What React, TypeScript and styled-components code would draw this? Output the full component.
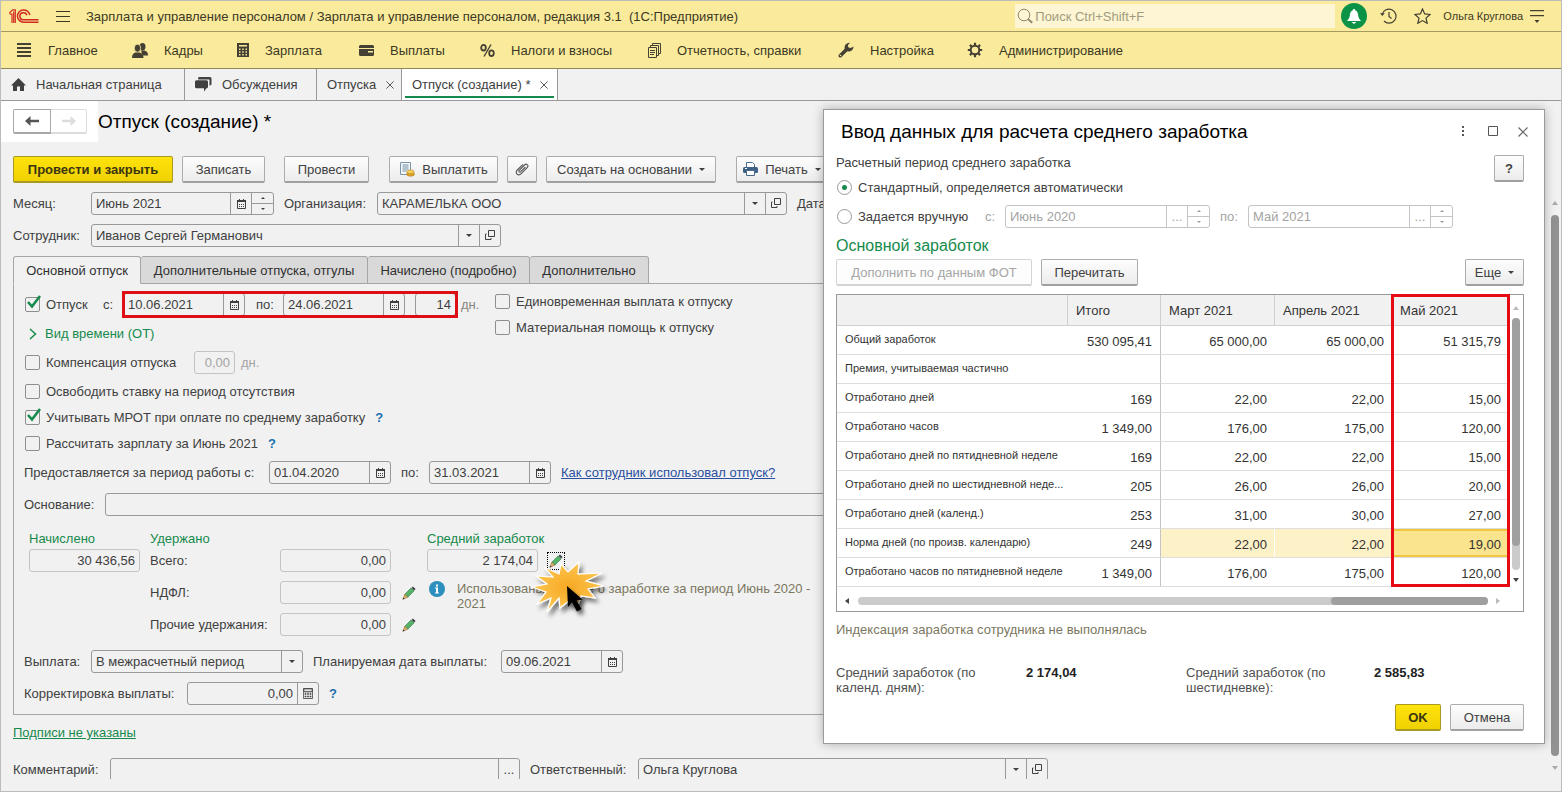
import React from 'react';
import styled, { createGlobalStyle, css } from 'styled-components';

const GlobalStyle = createGlobalStyle`
  *, *::before, *::after { box-sizing: border-box; }
  body { margin: 0; background: #f1f1f1; }
  body, button, input, select, textarea {
    font-family: 'Liberation Sans', Arial, sans-serif;
    font-size: 13px;
    line-height: 15px;
    color: #404040;
  }
  h1, h2, h3, p { margin: 0; font-weight: normal; }
`;

const GREEN = '#168a4c';
const LINE = '#999999';

/* ---------- shell ---------- */

const Shell = styled.div`
  height: 100vh;
  display: flex;
  flex-direction: column;
  border: 1px solid #bcbcbc;
  background: #f1f1f1;
  overflow: hidden;
`;

const TitleBar = styled.header`
  flex: none;
  display: flex;
  align-items: center;
  height: 31px;
  padding: 0 13px 0 8px;
  background: #faeb9c;
  border-bottom: 1px solid #a59a61;
`;

const AppTitle = styled.h1`
  flex: 1;
  font-size: 13px;
  line-height: 15px;
  color: #3c3823;
  white-space: pre;
`;

const IconButton = styled.button<{ $w?: number }>`
  display: flex;
  align-items: center;
  justify-content: center;
  flex: none;
  width: ${p => p.$w ?? 34}px;
  height: 28px;
  padding: 0;
  border: 0;
  background: none;
`;

const SearchBox = styled.label`
  display: flex;
  align-items: center;
  width: 320px;
  height: 24px;
  padding-left: 2px;
  gap: 2px;
  background: #fdf5d3;
  margin-right: 6px;

  input {
    flex: 1;
    border: 0;
    padding: 0;
    background: none;
    outline: none;
  }
  input::placeholder { color: #a19c80; opacity: 1; }
`;

const Bell = styled(IconButton)`
  width: 26px;
  height: 26px;
  border-radius: 50%;
  background: #0a9347;
  margin-right: 4px;
`;

const UserName = styled.span`
  font-size: 11px;
  color: #3c3823;
  margin: 0 3px 0 4px;
`;

const MenuBar = styled.nav`
  flex: none;
  display: flex;
  height: 37px;
  padding-left: 16px;
  background: #faeb9c;
  border-bottom: 1px solid #8f865a;
`;

const MenuItem = styled.a<{ $w: number }>`
  display: flex;
  align-items: center;
  gap: 16px;
  width: ${p => p.$w}px;
  color: #3c3823;
  text-decoration: none;
  white-space: nowrap;
  svg { flex: none; }
`;

const WindowTabs = styled.div`
  flex: none;
  display: flex;
  height: 32px;
  border-bottom: 1px solid ${LINE};
`;

const WindowTab = styled.button<{ $w: number; $active?: boolean }>`
  position: relative;
  display: flex;
  align-items: center;
  gap: 10px;
  width: ${p => p.$w}px;
  padding: 0 0 0 10px;
  border: 0;
  border-right: 1px solid ${LINE};
  background: ${p => (p.$active ? '#fff' : 'none')};
  white-space: nowrap;
  ${p => p.$active && css`
    &::after {
      content: '';
      position: absolute;
      left: 3px;
      right: 3px;
      bottom: 2px;
      height: 2px;
      background: ${GREEN};
    }
  `}
`;

const Workspace = styled.main`
  position: relative;
  flex: 1;
  min-height: 0;
  display: flex;
  padding-bottom: 12px;
`;

const FormArea = styled.div`
  flex: 1;
  min-width: 0;
  overflow: hidden;
`;

/* ---------- form ---------- */

const NavRow = styled.div`
  display: flex;
  align-items: center;
  height: 41px;
`;

const NavButtons = styled.div`
  display: flex;
  align-items: center;
  width: 97px;
  height: 41px;
  padding-left: 12px;
  background: #fff;
`;

const NavButton = styled.button`
  display: flex;
  align-items: center;
  justify-content: center;
  width: 38px;
  height: 25px;
  padding: 0;
  border: 1px solid #a8a8a8;
  border-bottom-width: 2px;
  border-radius: 2px 0 0 2px;
  background: #fff;
  &:disabled {
    width: 36px;
    border-color: #dcdcdc;
    border-left: 0;
    border-radius: 0 2px 2px 0;
  }
`;

const FormTitle = styled.h2`
  font-size: 19px;
  line-height: 22px;
  color: #000;
`;

const Body = styled.div`
  display: flex;
  flex-direction: column;
  gap: 9px;
  padding: 14px 12px 0 12px;
`;

const Commands = styled.div`
  display: flex;
  height: 27px;
`;

const Button = styled.button<{ $w: number; $gap?: number; $primary?: boolean }>`
  display: flex;
  align-items: center;
  justify-content: center;
  gap: 7px;
  flex: none;
  width: ${p => p.$w}px;
  height: 27px;
  margin-right: ${p => p.$gap ?? 9}px;
  padding: 0;
  border: 1px solid #acacac;
  border-bottom: 2px solid #a0a0a0;
  border-radius: 2px;
  background: linear-gradient(#fdfdfd, #ececec);
  white-space: nowrap;
  ${p => p.$primary && css`
    font-weight: bold;
    color: #3b3511;
    border-color: #a89a20;
    background: linear-gradient(#ffe30c, #efd100);
  `}
  &:disabled {
    color: #a6a6a6;
    border-color: #d4d4d4;
    background: #fdfdfd;
  }
`;

const Row = styled.div<{ $gap?: number; $top?: number }>`
  display: flex;
  align-items: center;
  gap: ${p => p.$gap ?? 10}px;
  height: 23px;
  margin-top: ${p => p.$top ?? 0}px;
`;

const Label = styled.label<{ $w?: number; $muted?: boolean; $indent?: number }>`
  flex: none;
  width: ${p => (p.$w ? `${p.$w}px` : 'auto')};
  padding-left: ${p => p.$indent ?? 0}px;
  color: ${p => (p.$muted ? '#a3a3a3' : '#404040')};
  white-space: nowrap;
`;

const Unit = styled.span`
  padding-left: 5px;
  color: #85857c;
`;

const FieldBox = styled.div<{ $w?: number; $soft?: boolean; $muted?: boolean; $right?: boolean; $left?: number }>`
  position: relative;
  display: flex;
  flex: ${p => (p.$w ? 'none' : '1')};
  width: ${p => (p.$w ? `${p.$w}px` : 'auto')};
  height: 23px;
  margin-left: ${p => p.$left ?? 0}px;
  border: 1px solid ${p => (p.$soft || p.$muted ? '#c4c4c4' : LINE)};
  border-radius: 3px;

  input, select {
    flex: 1;
    width: 0;
    min-width: 0;
    padding: 0 4px;
    border: 0;
    background: none;
    outline: none;
    appearance: none;
    text-align: ${p => (p.$right ? 'right' : 'left')};
    color: ${p => (p.$muted ? '#a3a3a3' : '#404040')};
    opacity: 1;
  }
`;

const Segment = styled.button`
  display: flex;
  align-items: center;
  justify-content: center;
  flex: none;
  width: 21px;
  padding: 0;
  border: 0;
  border-left: 1px solid ${LINE};
  background: none;
  &:disabled { border-color: #c4c4c4; color: #a3a3a3; }
`;

const SpinBox = styled.div<{ $muted?: boolean }>`
  display: flex;
  flex-direction: column;
  flex: none;
  width: 22px;
  border-left: 1px solid ${p => (p.$muted ? '#c4c4c4' : LINE)};
  button {
    flex: 1;
    display: flex;
    align-items: center;
    justify-content: center;
    padding: 0;
    border: 0;
    background: none;
  }
  button + button { border-top: 1px solid ${p => (p.$muted ? '#c4c4c4' : LINE)}; }
`;

const SheetTabs = styled.div`
  position: relative;
  display: flex;
  height: 28px;
  margin-bottom: -1px;
`;

const SheetTab = styled.button<{ $w: number; $active?: boolean }>`
  width: ${p => p.$w}px;
  padding: 0;
  border: 1px solid #a6a6a6;
  border-left-width: ${p => (p.$active ? '1px' : '0')};
  border-bottom-color: ${p => (p.$active ? '#f1f1f1' : '#a6a6a6')};
  border-radius: 3px 3px 0 0;
  background: ${p => (p.$active ? '#f1f1f1' : '#d9d9d9')};
  color: #303030;
  white-space: nowrap;
`;

const Sheet = styled.section`
  border: 1px solid #a6a6a6;
  padding: 9px 10px;
`;

const Columns = styled.div`
  display: flex;
`;

const Stack = styled.div<{ $gap: number; $w?: number }>`
  display: flex;
  flex-direction: column;
  flex: none;
  gap: ${p => p.$gap}px;
  width: ${p => (p.$w ? `${p.$w}px` : 'auto')};
`;

const CheckLabel = styled.label`
  position: relative;
  display: flex;
  align-items: center;
  gap: 6px;
  padding-left: 1px;
  height: 17px;
  white-space: nowrap;
  input {
    appearance: none;
    width: 15px;
    height: 15px;
    margin: 0;
    border: 1px solid #8e8e8e;
    border-radius: 2px;
  }
  svg {
    position: absolute;
    left: 1px;
    top: -2px;
  }
`;

const Marked = styled.div`
  position: relative;
  display: flex;
  align-items: center;
`;

const RedFrame = styled.div`
  position: absolute;
  inset: -2px -2px -2px -1px;
  border: 3px solid #dd0f14;
  pointer-events: none;
`;

const Disclosure = styled.button`
  display: flex;
  align-items: center;
  gap: 8px;
  height: 23px;
  padding: 0 0 0 5px;
  border: 0;
  background: none;
  color: ${GREEN};
`;

const Help = styled.a`
  color: #1b6fae;
  font-size: 13px;
  font-weight: bold;
  text-decoration: none;
`;

const Link = styled.a<{ $green?: boolean }>`
  color: ${p => (p.$green ? GREEN : '#2a4fa0')};
  line-height: 17px;
  white-space: nowrap;
`;

const Totals = styled.div`
  display: flex;
  padding-left: 5px;
  margin: 13px 0 14px;
`;

const GroupTitle = styled.h3`
  font-size: 13px;
  line-height: 20px;
  color: ${GREEN};
`;

const PencilSlot = styled(IconButton)<{ $focused?: boolean }>`
  width: 16px;
  height: 16px;
  outline: ${p => (p.$focused ? '1px dotted #000' : 'none')};
`;

const Info = styled.div`
  position: relative;
  display: flex;
  gap: 12px;
  padding-left: 2px;
  svg { flex: none; }
  p { width: 370px; color: #7b7760; }
`;

const Burst = styled.svg`
  position: absolute;
  left: 100px;
  top: -26px;
`;

const CommentRow = styled(Row)`
  margin-top: 8px;
`;

/* ---------- outer scroll bar ---------- */

const PageScroll = styled.div`
  flex: none;
  display: flex;
  flex-direction: column;
  align-items: center;
  gap: 8px;
  width: 12px;
  padding: 98px 0 7px;
  span {
    flex: 1;
    width: 8px;
    border-radius: 4px;
    background: #929292;
  }
`;

/* ---------- dialog ---------- */

const Dialog = styled.section`
  position: absolute;
  top: 8px;
  right: 16px;
  width: 722px;
  padding: 0 20px 12px 12px;
  background: #fff;
  border: 1px solid #9a9a9a;
  box-shadow: 0 0 10px rgba(0, 0, 0, 0.28);
`;

const DialogHead = styled.header`
  display: flex;
  align-items: center;
  height: 43px;
  padding-left: 5px;
  margin-right: -14px;
  h2 { flex: 1; font-size: 19px; line-height: 22px; color: #000; }
`;

const PeriodHead = styled.div`
  display: flex;
  align-items: flex-start;
  justify-content: space-between;
  height: 21px;
  margin-top: 2px;
`;

const RadioLabel = styled.label<{ $w?: number }>`
  display: flex;
  align-items: center;
  gap: 6px;
  width: ${p => (p.$w ? `${p.$w}px` : 'auto')};
  white-space: nowrap;
  input {
    appearance: none;
    width: 15px;
    height: 15px;
    margin: 0 0 0 1px;
    border: 1px solid #9a9a9a;
    border-radius: 50%;
    background: #fff;
  }
  input:checked { background: radial-gradient(circle, ${GREEN} 0 2px, #fff 3px); }
`;

const SectionTitle = styled.h3`
  font-size: 16px;
  line-height: 20px;
  margin: 8px 0 3px;
  color: ${GREEN};
`;

const Spacer = styled.span`
  flex: 1;
`;

const GridBox = styled.div`
  position: relative;
  display: flex;
  flex-wrap: wrap;
  height: 318px;
  margin-top: 8px;
  border: 1px solid ${LINE};
`;

const Table = styled.table`
  width: 672px;
  height: 292px;
  table-layout: fixed;
  border-collapse: separate;
  border-spacing: 0;
  color: #333;

  th {
    height: 31px;
    padding: 0 8px;
    background: #f1f1f1;
    border-bottom: 1px solid #cfcfcf;
    border-right: 1px solid #cfcfcf;
    font-weight: normal;
    text-align: left;
  }
  th:last-child { border-right: 0; }
  td {
    height: 29px;
    padding: 2px 8px 0;
    border-bottom: 1px solid #dedede;
    text-align: right;
    white-space: nowrap;
  }
  td:first-child {
    padding: 0 0 2px 8px;
    font-size: 11px;
    text-align: left;
  }
  td:nth-child(2) { border-right: 1px solid #c4c4c4; }
`;

const Cell = styled.td<{ $state?: 'row' | 'current' }>`
  ${p => p.$state === 'row' && css`
    background: #fdf1c8;
    box-shadow: inset -1px 0 #fff;
  `}
  ${p => p.$state === 'current' && css`
    background: #fae48e;
    box-shadow: inset 0 0 0 2px #f0c840;
  `}
`;

const MonthFrame = styled.div`
  position: absolute;
  top: -1px;
  right: 13px;
  width: 119px;
  height: 293px;
  border: 3px solid #e60a12;
  pointer-events: none;
`;

const VScroll = styled.div`
  display: flex;
  flex-direction: column;
  align-items: center;
  gap: 6px;
  width: 14px;
  height: 292px;
  padding: 9px 0 3px;
  div {
    flex: 1;
    width: 8px;
    border-radius: 4px;
    background: #cbcbcb;
  }
  span {
    display: block;
    height: 228px;
    border-radius: 4px;
    background: #a0a0a0;
  }
`;

const HScroll = styled.div`
  display: flex;
  align-items: center;
  gap: 6px;
  width: 100%;
  height: 24px;
  padding: 4px 21px 0 7px;
  div {
    display: flex;
    justify-content: flex-end;
    flex: 1;
    height: 8px;
    border-radius: 4px;
    background: #cbcbcb;
  }
  span {
    width: 157px;
    border-radius: 4px;
    background: #9f9f9f;
  }
`;

const Note = styled.p`
  margin: 10px 0 28px;
  color: #7b7760;
`;

const Averages = styled.dl`
  display: grid;
  grid-template-columns: 160px 130px 158px 1fr;
  column-gap: 30px;
  margin: 0 0 9px;
  dt { color: #505050; }
  dd { margin: 0; font-weight: bold; color: #222; }
`;

const DialogFoot = styled.footer`
  display: flex;
  justify-content: flex-end;
`;

/* ---------- icons ---------- */

const Down = ({ color = '#404040' }: { color?: string }) => (
  <svg width="6" height="3" viewBox="0 0 6 3"><path d="M0 0h6L3 3z" fill={color} /></svg>
);

const Tri = ({ d, color }: { d: string; color: string }) => (
  <svg width="8" height="8" viewBox="0 0 8 8"><path d={d} fill={color} /></svg>
);

const OpenIcon = () => (
  <svg width="11" height="11" viewBox="0 0 11 11" fill="none" stroke="#404040">
    <path d="M3.500 .5h6v6h-6z" /><path d="M1.500 4H.5v5.500H6V8" />
  </svg>
);

const CalendarIcon = () => (
  <svg width="9" height="10" viewBox="0 0 9 10">
    <path d="M.5 2.500h8v7h-8z" fill="none" stroke="#404040" />
    <path d="M0 1h9v2H0zM2 0h1v2H2zM6 0h1v2H6z" fill="#404040" />
    <path d="M2 5.500h5M2 7.500h5" stroke="#404040" strokeDasharray="1 1" />
  </svg>
);

const CalcIcon = ({ size = 11 }: { size?: number }) => (
  <svg width={size} height={size + 1} viewBox="0 0 12 13">
    <path d="M.5 .5h11v12H.5z" fill="none" stroke="#404040" />
    <path d="M1 1h10v3H1z" fill="none" stroke="#404040" />
    <path d="M2 6h8M2 8h8M2 10.200h8" stroke="#404040" strokeWidth="1.300" strokeDasharray="2 1" />
  </svg>
);

const MenuCalc = () => (
  <svg width="12" height="14" viewBox="0 0 12 14">
    <path d="M0 0h12v14H0zM2 2v1.500h8V2zM2 5.500V7h1.500V5.500zM5.200 5.500V7h1.500V5.500zM8.500 5.500V7H10V5.500zM2 8.200v1.500h1.500V8.200zM5.200 8.200v1.500h1.500V8.200zM8.500 8.200v1.500H10V8.200zM2 11v1.500h1.500V11zM5.200 11v1.500h1.500V11zM8.500 11v1.500H10V11z" fill="#454034" fillRule="evenodd" />
  </svg>
);

const Cross = ({ size = 8, color = '#555' }: { size?: number; color?: string }) => (
  <svg width={size} height={size} viewBox="0 0 10 10" stroke={color} strokeWidth="1.200"><path d="M.5 .5l9 9M9.500 .5l-9 9" /></svg>
);

const Tick = () => (
  <svg width="16" height="15" viewBox="0 0 16 15" fill="none" stroke={GREEN} strokeWidth="2.600"><path d="M3 8l4 4.500L15 2" /></svg>
);

const Pencil = () => (
  <svg width="14" height="14" viewBox="0 0 14 14">
    <path d="M9 2L12 5 5.800 11.200 2.800 8.200z" fill="#55b268" stroke="#2e7a40" strokeWidth=".6" />
    <path d="M9.500 1.800L11 .4 13.600 3 12.200 4.500z" fill="#3d4347" />
    <path d="M2.800 8.200l3 3L1 13.200z" fill="#e0b46c" stroke="#8a6430" strokeWidth=".6" />
    <path d="M1.300 11.500l1.200 1.200L.5 13.500z" fill="#333" />
  </svg>
);

const Arrow = ({ color, flip }: { color: string; flip?: boolean }) => (
  <svg width="14" height="10" viewBox="0 0 14 10">
    <path d={flip ? 'M14 5L8.500 0v3.700H0v2.600h8.500V10z' : 'M0 5l5.500-5v3.700H14v2.600H5.500V10z'} fill={color} />
  </svg>
);

const Logo = () => (
  <svg width="30" height="15" viewBox="0 0 30 15" fill="none" stroke="#cf2a1f">
    <path d="M0 4.200L3.800 .8H6.300V14M.8 5.200H3V14M4.700 2.500V14" strokeWidth="1.200" />
    <path d="M20.800 6A6.200 6.200 0 1 0 14.800 13.300H29.500" strokeWidth="1.500" />
    <path d="M17.800 6.300A3.500 3.500 0 1 0 14.800 10.700H29.500" strokeWidth="1.500" />
  </svg>
);

const Lines = ({ n, w, h, gap }: { n: number; w: number; h: number; gap: number }) => (
  <svg width={w} height={(n - 1) * gap + h} fill="#3c3823">
    {Array.from({ length: n }, (_, i) => <rect key={i} y={i * gap} width={w} height={h} />)}
  </svg>
);

const MainIcon = () => (
  <svg width="15" height="14" viewBox="0 0 15 14" fill="#454034">
    <path d="M0 0h14v2H0zM0 4h14v2H0zM0 8h14v2H0zM0 12h14v2H0z" />
  </svg>
);

const ink = '#454034';

const People = () => (
  <svg width="16" height="15" viewBox="0 0 16 15" fill={ink}>
    <ellipse cx="10.500" cy="3.700" rx="3" ry="3.700" />
    <path d="M9 7.500h3.500c2.500 1 3.500 2 3.500 5h-5.500z" />
    <ellipse cx="5.500" cy="5.200" rx="3.200" ry="4" stroke="#faeb9c" strokeWidth=".8" />
    <path d="M0 15c0-3 .8-4.500 3.500-5.500h4c3 1 4 2.500 4 5.500z" />
  </svg>
);

const Card = () => (
  <svg width="15" height="11" viewBox="0 0 15 11" fill={ink}>
    <path d="M1.500 0h12A1.500 1.500 0 0 1 15 1.500V3H0V1.500A1.500 1.500 0 0 1 1.500 0z" />
    <path d="M0 4h15v5.500a1.500 1.500 0 0 1-1.500 1.500h-12A1.500 1.500 0 0 1 0 9.500zM9 6v1.500h5V6z" fillRule="evenodd" />
  </svg>
);

const Percent = () => (
  <svg width="15" height="13" viewBox="0 0 15 13" fill="none" stroke={ink} strokeWidth="1.800">
    <ellipse cx="3.500" cy="3.700" rx="2.300" ry="2.800" /><ellipse cx="11.500" cy="9.200" rx="2.300" ry="2.800" /><path d="M11 .5L4 12.500" strokeWidth="1.400" />
  </svg>
);

const Docs = () => (
  <svg width="13" height="15" viewBox="0 0 13 15" fill="none" stroke={ink}>
    <path d="M.5 4.500h8v10h-8z" /><path d="M2.500 4V2.500h8v10H9M4.500 2V.5h8v10H11M2 7.500h5M2 9.500h5M2 11.500h4" />
  </svg>
);

const Wrench = () => (
  <svg width="16" height="16" viewBox="0 0 16 16">
    <path d="M2.300 13.700L9 7" stroke={ink} strokeWidth="3.600" strokeLinecap="round" />
    <path d="M15.500 4.500a4.800 4.800 0 0 1-6.200 4.800L6.700 6.700A4.800 4.800 0 0 1 12 .8L9.800 3.300l.7 2.200 2.200.6z" fill={ink} />
    <circle cx="2.500" cy="13.500" r=".8" fill="#faeb9c" />
  </svg>
);

const Gear = () => (
  <svg width="16" height="16" viewBox="0 0 16 16" fill="none" stroke={ink}>
    <circle cx="8" cy="8" r="4.300" strokeWidth="2" />
    <path d="M8 .8v2.500M8 12.700v2.500M.8 8h2.500M12.700 8h2.500M2.900 2.900l1.800 1.800M11.300 11.300l1.800 1.800M2.900 13.100l1.800-1.800M11.300 4.700l1.800-1.800" strokeWidth="2.200" />
  </svg>
);

const Home = () => (
  <svg width="15" height="13" viewBox="0 0 15 13" fill="#404040"><path d="M7.500 0L15 7.500h-2V13H9V8.500H6V13H2V7.500H0z" /></svg>
);

const Chat = () => (
  <svg width="17" height="15" viewBox="0 0 17 15" fill="#404040">
    <path d="M5 0h10a1.500 1.500 0 0 1 1.500 1.500v6L14.500 9V2.500H3.500A1.500 1.500 0 0 1 5 0z" />
    <path d="M1.500 3.300h10A1.500 1.500 0 0 1 13 4.800v5a1.500 1.500 0 0 1-1.500 1.500L9 14.500v-3.200H1.500A1.500 1.500 0 0 1 0 9.800v-5a1.500 1.500 0 0 1 1.500-1.500z" />
  </svg>
);

const Magnifier = () => (
  <svg width="16" height="16" viewBox="0 0 16 16" fill="none" stroke="#8f8a6e">
    <circle cx="7" cy="7" r="5.800" /><path d="M11.200 11.200l4 3.500" strokeWidth="2" />
  </svg>
);

const BellIcon = () => (
  <svg width="14" height="15" viewBox="0 0 14 15" fill="#fff">
    <path d="M7 0c.8 0 1.200.6 1.200 1.200C10.300 2 11 4 11.200 6.500c.2 2.300 1 3.500 2.800 5.500H0c1.800-2 2.600-3.200 2.800-5.500C3 4 3.700 2 5.800 1.200 5.800.6 6.200 0 7 0z" />
    <path d="M4.500 13h5L7 15z" />
  </svg>
);

const HistoryIcon = () => (
  <svg width="17" height="16" viewBox="0 0 17 16" fill="none" stroke={ink} strokeWidth="1.200">
    <path d="M2.200 6.500A7 7 0 1 1 4 13" /><path d="M9 4v4.500l2.500 2" /><path d="M0 5.200h4.800L2.300 8z" fill={ink} stroke="none" />
  </svg>
);

const StarIcon = () => (
  <svg width="17" height="16" viewBox="0 0 17 16" fill="none" stroke={ink} strokeWidth="1.200">
    <path d="M8.500 1l2.200 4.900 5.300.6-4 3.600 1.200 5.200-4.700-2.700-4.700 2.700L5 10.100 1 6.500l5.300-.6z" />
  </svg>
);

const SettingsLines = () => (
  <svg width="14" height="13" viewBox="0 0 14 13" fill={ink}><path d="M0 0h14v1.200H0zM0 5h14v1.200H0zM4.500 10h5L7 13z" /></svg>
);

const PayIcon = () => (
  <svg width="16" height="16" viewBox="0 0 16 16">
    <path d="M1.500 1.500h10v12h-10z" fill="#f4f8fb" stroke="#7d94a8" />
    <path d="M3.500 4h6M3.500 6h6M3.500 8h6M3.500 10h4" stroke="#6f8ba3" />
    <ellipse cx="11.500" cy="13" rx="4" ry="2.200" fill="#e0a52a" stroke="#a8781a" strokeWidth=".6" />
    <ellipse cx="11.500" cy="10.800" rx="3.600" ry="1.900" fill="#f6cf58" stroke="#b5851f" strokeWidth=".6" />
  </svg>
);

const Clip = () => (
  <svg width="14" height="14" viewBox="0 0 14 14" fill="none" stroke="#555" strokeWidth="1.100">
    <path d="M10.500 5L5.800 9.700c-1.200 1.200-2.700-.2-1.500-1.400L9.500 3c2-2 4.700.6 2.700 2.700l-6 6c-3 3-6.800-.8-3.900-3.700L8 2.300" />
  </svg>
);

const Printer = () => (
  <svg width="15" height="14" viewBox="0 0 15 14">
    <path d="M3.500 .5h6l2 2V6h-8z" fill="#fff" stroke="#4a6a8c" />
    <rect y="5" width="15" height="6" rx="1.500" fill="#3f6184" />
    <path d="M3.500 8.500h8v5h-8z" fill="#fff" stroke="#4a6a8c" />
    <path d="M2 6.500h2" stroke="#fff" />
  </svg>
);

const InfoIcon = () => (
  <svg width="16" height="16" viewBox="0 0 16 16">
    <circle cx="8" cy="8" r="8" fill="#2c8fbd" />
    <path d="M7 3.500h2v2H7zM6 6.500h3v5h1v1H6v-1h1v-4H6z" fill="#fff" />
  </svg>
);

const ClickBurst = () => (
  <Burst width="84" height="72" viewBox="0 0 84 72" aria-hidden="true">
    <defs>
      <radialGradient id="burst"><stop offset="0" stopColor="#f7a823" /><stop offset="1" stopColor="#fdc650" /></radialGradient>
      <filter id="shade" x="-20%" y="-20%" width="150%" height="150%">
        <feDropShadow dx="3" dy="4" stdDeviation="2" floodOpacity=".5" />
      </filter>
    </defs>
    <path
      filter="url(#shade)"
      fill="url(#burst)"
      stroke="#fff"
      strokeWidth="1.200"
      d="M52 7L51 19 75 18 59 26 77 31 61 34 68 43 54 41 50 53 43 45 33 53 32 43 20 57 24 43 10 49 19 37 5 32 20 29 9 21 26 22 17 12 32 19 34 9 41 17z"
    />
    <path filter="url(#shade)" d="M40 31l1 21 4-4.500 5 9 4.500-2.500-5-8.500 6-1z" fill="#000" />
  </Burst>
);

/* ---------- composed controls ---------- */

const CalendarSegment = () => <Segment type="button" aria-label="Календарь"><CalendarIcon /></Segment>;

const Spin = ({ muted }: { muted?: boolean }) => {
  const c = muted ? '#999' : '#404040';
  return (
    <SpinBox $muted={muted}>
      <button type="button" disabled={muted} aria-label="Больше"><svg width="4" height="2"><path d="M0 2h4L2 0z" fill={c} /></svg></button>
      <button type="button" disabled={muted} aria-label="Меньше"><svg width="4" height="2"><path d="M0 0h4L2 2z" fill={c} /></svg></button>
    </SpinBox>
  );
};

const DateField = ({ id, value }: { id: string; value: string }) => (
  <FieldBox $w={122}>
    <input id={id} defaultValue={value} />
    <CalendarSegment />
  </FieldBox>
);

const Check = ({ text, on }: { text: string; on?: boolean }) => (
  <CheckLabel>
    <input type="checkbox" defaultChecked={on} />
    {on && <Tick />}
    {text}
  </CheckLabel>
);

const Combo = ({ id, value, w, open }: { id: string; value: string; w: number; open?: boolean }) => (
  <FieldBox $w={w}>
    <select id={id}><option>{value}</option></select>
    <Segment type="button" aria-label="Выбрать"><Down /></Segment>
    {open && <Segment type="button" aria-label="Открыть"><OpenIcon /></Segment>}
  </FieldBox>
);

const menu = [
  { icon: <MainIcon />, text: 'Главное', w: 115 },
  { icon: <People />, text: 'Кадры', w: 105 },
  { icon: <MenuCalc />, text: 'Зарплата', w: 122 },
  { icon: <Card />, text: 'Выплаты', w: 121 },
  { icon: <Percent />, text: 'Налоги и взносы', w: 168 },
  { icon: <Docs />, text: 'Отчетность, справки', w: 190 },
  { icon: <Wrench />, text: 'Настройка', w: 129 },
  { icon: <Gear />, text: 'Администрирование', w: 160 },
];

const rows: [string, string, string, string, string][] = [
  ['Общий заработок', '530 095,41', '65 000,00', '65 000,00', '51 315,79'],
  ['Премия, учитываемая частично', '', '', '', ''],
  ['Отработано дней', '169', '22,00', '22,00', '15,00'],
  ['Отработано часов', '1 349,00', '176,00', '175,00', '120,00'],
  ['Отработано дней по пятидневной неделе', '169', '22,00', '22,00', '15,00'],
  ['Отработано дней по шестидневной неде...', '205', '26,00', '26,00', '20,00'],
  ['Отработано дней (календ.)', '253', '31,00', '30,00', '27,00'],
  ['Норма дней (по произв. календарю)', '249', '22,00', '22,00', '19,00'],
  ['Отработано часов по пятидневной неделе', '1 349,00', '176,00', '175,00', '120,00'],
];
const CURRENT = 7;

const MonthField = ({ id, value }: { id: string; value: string }) => (
  <FieldBox $w={205} $muted>
    <input id={id} defaultValue={value} disabled />
    <Segment type="button" disabled>...</Segment>
    <Spin muted />
  </FieldBox>
);

const EarningsDialog = () => (
  <Dialog role="dialog" aria-labelledby="dialog-title">
    <DialogHead>
      <h2 id="dialog-title">Ввод данных для расчета среднего заработка</h2>
      <IconButton $w={30} aria-label="Еще"><svg width="3" height="11" fill="#555"><path d="M0 0h2v2H0zM0 4h2v2H0zM0 8h2v2H0z" /></svg></IconButton>
      <IconButton $w={30} aria-label="Развернуть"><svg width="11" height="11" fill="none" stroke="#555"><path d="M.5 .5h9v9h-9z" /></svg></IconButton>
      <IconButton $w={30} aria-label="Закрыть"><Cross size={10} color="#666" /></IconButton>
    </DialogHead>
    <PeriodHead>
      <span>Расчетный период среднего заработка</span>
      <Button $w={30} $gap={0}><b>?</b></Button>
    </PeriodHead>
    <Row>
      <RadioLabel>
        <input type="radio" name="period" defaultChecked />
        Стандартный, определяется автоматически
      </RadioLabel>
    </Row>
    <Row $top={6}>
      <RadioLabel $w={139}>
        <input type="radio" name="period" />
        Задается вручную
      </RadioLabel>
      <Label htmlFor="from" $muted $w={10}>с:</Label>
      <MonthField id="from" value="Июнь 2020" />
      <Label htmlFor="to" $muted $w={18}>по:</Label>
      <MonthField id="to" value="Май 2021" />
    </Row>
    <SectionTitle>Основной заработок</SectionTitle>
    <Commands>
      <Button $w={196} disabled>Дополнить по данным ФОТ</Button>
      <Button $w={97}>Перечитать</Button>
      <Spacer />
      <Button $w={59} $gap={0}>Еще <Down /></Button>
    </Commands>
    <GridBox>
      <Table>
        <colgroup>
          <col width="231" /><col width="93" /><col width="114" /><col width="117" /><col width="117" />
        </colgroup>
        <thead>
          <tr><th /><th>Итого</th><th>Март 2021</th><th>Апрель 2021</th><th>Май 2021</th></tr>
        </thead>
        <tbody>
          {rows.map((r, i) => (
            <tr key={i}>
              {r.map((v, j) => (
                <Cell key={j} $state={i === CURRENT && j > 1 ? (j === 4 ? 'current' : 'row') : undefined}>{v}</Cell>
              ))}
            </tr>
          ))}
        </tbody>
      </Table>
      <VScroll>
        <Tri d="M1 6h6L4 2z" color="#bbb" />
        <div><span /></div>
        <Tri d="M1 2h6L4 6z" color="#444" />
      </VScroll>
      <HScroll>
        <Tri d="M5 1v6L1 4z" color="#444" />
        <div><span /></div>
        <Tri d="M2 1v6l4-3z" color="#bbb" />
      </HScroll>
      <MonthFrame />
    </GridBox>
    <Note>Индексация заработка сотрудника не выполнялась</Note>
    <Averages>
      <dt>Средний заработок (по календ. дням):</dt><dd>2 174,04</dd>
      <dt>Средний заработок (по шестидневке):</dt><dd>2 585,83</dd>
    </Averages>
    <DialogFoot>
      <Button $w={46} $primary>OK</Button>
      <Button $w={74} $gap={0}>Отмена</Button>
    </DialogFoot>
  </Dialog>
);

const LeaveForm = () => (
  <FormArea>
    <NavRow>
      <NavButtons>
        <NavButton aria-label="Назад"><Arrow color="#555" /></NavButton>
        <NavButton aria-label="Вперед" disabled><Arrow color="#dcdcdc" flip /></NavButton>
      </NavButtons>
      <FormTitle>Отпуск (создание) *</FormTitle>
    </NavRow>
    <Body>
      <Commands>
        <Button $w={160} $primary>Провести и закрыть</Button>
        <Button $w={83} $gap={19}>Записать</Button>
        <Button $w={85} $gap={20}>Провести</Button>
        <Button $w={109}><PayIcon />Выплатить</Button>
        <Button $w={30} aria-label="Файлы"><Clip /></Button>
        <Button $w={170} $gap={20}>Создать на основании <Down /></Button>
        <Button $w={92}><Printer />Печать <Down /></Button>
      </Commands>
      <Row>
        <Label $w={68} htmlFor="month">Месяц:</Label>
        <FieldBox $w={183}>
          <input id="month" defaultValue="Июнь 2021" />
          <CalendarSegment />
          <Spin />
        </FieldBox>
        <Label $w={83} htmlFor="org">Организация:</Label>
        <Combo id="org" value="КАРАМЕЛЬКА ООО" w={410} open />
        <Label htmlFor="date">Дата:</Label>
        <DateField id="date" value="" />
      </Row>
      <Row>
        <Label $w={68} htmlFor="employee">Сотрудник:</Label>
        <Combo id="employee" value="Иванов Сергей Германович" w={410} open />
      </Row>
      <div>
        <SheetTabs role="tablist">
          <SheetTab $w={128} $active role="tab">Основной отпуск</SheetTab>
          <SheetTab $w={227} role="tab">Дополнительные отпуска, отгулы</SheetTab>
          <SheetTab $w={162} role="tab">Начислено (подробно)</SheetTab>
          <SheetTab $w={119} role="tab">Дополнительно</SheetTab>
        </SheetTabs>
        <Sheet>
          <Columns>
            <Stack $gap={6} $w={470}>
              <Row $gap={0}>
                <Stack $gap={0} $w={79}><Check text="Отпуск" on /></Stack>
                <Label $w={20} htmlFor="from-date">с:</Label>
                <Marked>
                  <DateField id="from-date" value="10.06.2021" />
                  <Label $w={38} $indent={11} htmlFor="to-date">по:</Label>
                  <DateField id="to-date" value="24.06.2021" />
                  <FieldBox $w={41} $left={10} $right><input aria-label="Количество дней" defaultValue="14" /></FieldBox>
                  <RedFrame />
                </Marked>
                <Unit>дн.</Unit>
              </Row>
              <Disclosure type="button">
                <svg width="8" height="12" viewBox="0 0 8 12" fill="none" stroke={GREEN} strokeWidth="1.500"><path d="M1 1l5.500 5L1 11" /></svg>
                Вид времени (ОТ)
              </Disclosure>
              <Row $gap={6}>
                <Stack $gap={0} $w={164}><Check text="Компенсация отпуска" /></Stack>
                <FieldBox $w={41} $muted $right><input disabled aria-label="Дни компенсации" defaultValue="0,00" /></FieldBox>
                <Label $muted>дн.</Label>
              </Row>
              <Stack $gap={3}>
                <Row><Check text="Освободить ставку на период отсутствия" /></Row>
                <Row><Check text="Учитывать МРОТ при оплате по среднему заработку" on /><Help href="#mrot">?</Help></Row>
                <Row><Check text="Рассчитать зарплату за Июнь 2021" /><Help href="#calc">?</Help></Row>
              </Stack>
              <Row>
                <Label $w={235} htmlFor="work-from">Предоставляется за период работы с:</Label>
                <DateField id="work-from" value="01.04.2020" />
                <Label $w={18} htmlFor="work-to">по:</Label>
                <DateField id="work-to" value="31.03.2021" />
                <Link href="#usage">Как сотрудник использовал отпуск?</Link>
              </Row>
            </Stack>
            <Stack $gap={9}>
              <Check text="Единовременная выплата к отпуску" />
              <Check text="Материальная помощь к отпуску" />
            </Stack>
          </Columns>
          <Row $gap={0} $top={9}>
            <Label $w={81} htmlFor="basis">Основание:</Label>
            <FieldBox><input id="basis" /></FieldBox>
          </Row>
          <Totals>
            <Stack $gap={0} $w={121}>
              <GroupTitle>Начислено</GroupTitle>
              <FieldBox $w={111} $soft $right style={undefined}><input aria-label="Начислено" readOnly value="30 436,56" /></FieldBox>
            </Stack>
            <Stack $gap={0} $w={277}>
              <GroupTitle>Удержано</GroupTitle>
              <Stack $gap={9}>
                <Row $gap={0}><Label $w={130} htmlFor="held">Всего:</Label><FieldBox $w={111} $soft $right><input id="held" readOnly value="0,00" /></FieldBox></Row>
                <Row><Label $w={120} htmlFor="ndfl">НДФЛ:</Label><FieldBox $w={111} $soft $right><input id="ndfl" readOnly value="0,00" /></FieldBox><PencilSlot aria-label="Изменить НДФЛ"><Pencil /></PencilSlot></Row>
                <Row><Label $w={120} htmlFor="other">Прочие удержания:</Label><FieldBox $w={111} $soft $right><input id="other" readOnly value="0,00" /></FieldBox><PencilSlot aria-label="Изменить удержания"><Pencil /></PencilSlot></Row>
              </Stack>
            </Stack>
            <div>
              <GroupTitle>Средний заработок</GroupTitle>
              <Stack $gap={9}>
                <Row>
                  <FieldBox $w={111} $soft $right><input aria-label="Средний заработок" readOnly value="2 174,04" /></FieldBox>
                  <PencilSlot $focused aria-label="Изменить средний заработок"><Pencil /></PencilSlot>
                </Row>
                <Info>
                  <InfoIcon />
                  <p>Использованы данные о заработке за период Июнь 2020 - 2021</p>
                  <ClickBurst />
                </Info>
              </Stack>
            </div>
          </Totals>
          <Stack $gap={9}>
            <Row>
              <Label $w={57} htmlFor="payout">Выплата:</Label>
              <Combo id="payout" value="В межрасчетный период" w={212} />
              <Label $w={178} htmlFor="plan">Планируемая дата выплаты:</Label>
              <DateField id="plan" value="09.06.2021" />
            </Row>
            <Row>
              <Label $w={153} htmlFor="correction">Корректировка выплаты:</Label>
              <FieldBox $w={132} $right>
                <input id="correction" defaultValue="0,00" />
                <Segment type="button" aria-label="Калькулятор"><CalcIcon size={10} /></Segment>
              </FieldBox>
              <Help href="#correction-help">?</Help>
            </Row>
          </Stack>
        </Sheet>
      </div>
      <div><Link $green href="#signatures">Подписи не указаны</Link></div>
      <CommentRow>
        <Label $w={87} htmlFor="comment">Комментарий:</Label>
        <FieldBox $w={410}><input id="comment" /><Segment type="button">...</Segment></FieldBox>
        <Label $w={98} htmlFor="responsible">Ответственный:</Label>
        <Combo id="responsible" value="Ольга Круглова" w={410} open />
      </CommentRow>
    </Body>
  </FormArea>
);

export default function App() {
  return (
    <Shell>
      <GlobalStyle />
      <TitleBar>
        <Logo />
        <IconButton $w={47} aria-label="Меню"><Lines n={3} w={14} h={1} gap={5} /></IconButton>
        <AppTitle>Зарплата и управление персоналом / Зарплата и управление персоналом, редакция 3.1  (1С:Предприятие)</AppTitle>
        <SearchBox>
          <Magnifier />
          <input type="search" aria-label="Поиск" placeholder="Поиск Ctrl+Shift+F" />
        </SearchBox>
        <Bell aria-label="Уведомления"><BellIcon /></Bell>
        <IconButton aria-label="История"><HistoryIcon /></IconButton>
        <IconButton aria-label="Избранное"><StarIcon /></IconButton>
        <UserName>Ольга Круглова</UserName>
        <IconButton $w={22} aria-label="Настройки"><SettingsLines /></IconButton>
      </TitleBar>
      <MenuBar>
        {menu.map(m => <MenuItem key={m.text} $w={m.w} href="#menu">{m.icon}{m.text}</MenuItem>)}
      </MenuBar>
      <WindowTabs>
        <WindowTab $w={184}><Home />Начальная страница</WindowTab>
        <WindowTab $w={132}><Chat />Обсуждения</WindowTab>
        <WindowTab $w={85}>Отпуска <Cross /></WindowTab>
        <WindowTab $w={156} $active>Отпуск (создание) * <Cross /></WindowTab>
      </WindowTabs>
      <Workspace>
        <LeaveForm />
        <PageScroll>
          <Tri d="M1 6h6L4 2z" color="#aaa" />
          <span />
          <Tri d="M1 2h6L4 6z" color="#aaa" />
        </PageScroll>
        <EarningsDialog />
      </Workspace>
    </Shell>
  );
}
